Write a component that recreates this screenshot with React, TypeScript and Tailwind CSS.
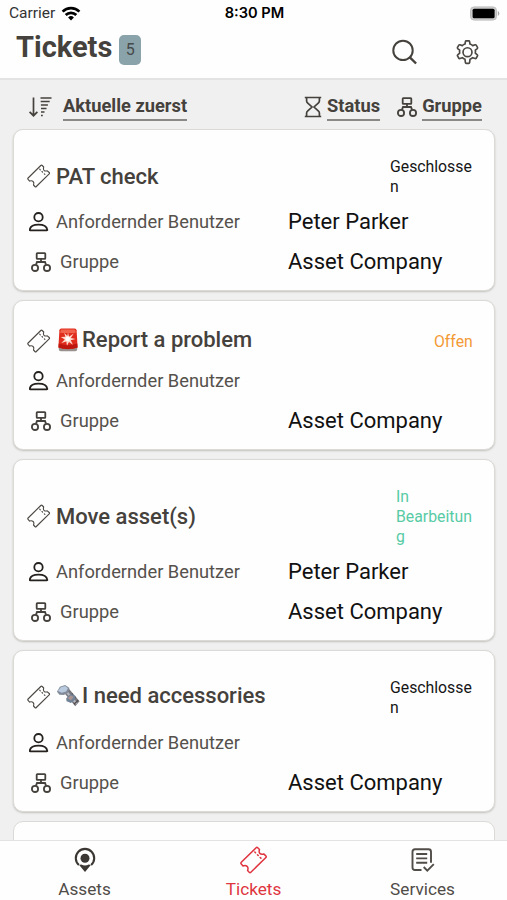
import type { ReactNode } from "react";
import clsx from "clsx";

type IconProps = { className?: string };

type Ticket = {
  title: string;
  emoji?: ReactNode;
  status: string;
  statusClass: string;
  user?: string;
  group: string;
};

function WifiIcon() {
  return (
    <svg viewBox="0 0 20 15" className="ml-[6px] h-[15px] w-5" fill="none" stroke="#000" strokeWidth="2.7">
      <path d="M1.6 5.6a12 12 0 0 1 16.8 0" />
      <path d="M4.7 9a7.5 7.5 0 0 1 10.6 0" />
      <path d="M10 14.4 7.1 11.5a4.1 4.1 0 0 1 5.8 0z" fill="#000" stroke="none" />
    </svg>
  );
}

function BatteryIcon() {
  return (
    <svg viewBox="0 0 31 15" className="h-[15px] w-[31px]">
      <rect x="1.5" y=".9" width="26" height="13.2" rx="3.6" fill="#ccc" stroke="#bdbdbd" />
      <rect x="3.6" y="2.7" width="22" height="9.6" rx="1.6" fill="#000" />
      <path d="M28.8 5c2 .8 2 4 0 4.8z" fill="#aaa" />
    </svg>
  );
}

function SearchIcon() {
  return (
    <svg viewBox="0 0 26 26" className="h-[26px] w-[26px]" fill="none" stroke="#45413c" strokeWidth="2">
      <circle cx="11" cy="11.4" r="9.7" />
      <path d="m17.6 18.2 6.5 6.3" strokeWidth="2.4" />
    </svg>
  );
}

function GearIcon() {
  return (
    <svg viewBox="0 0 24 24" className="h-[25px] w-[25px]" fill="none" stroke="#4b4742" strokeWidth="1.6" strokeLinejoin="round">
      <path d="M9.6 3.9 10 1.5Q10.1.8 10.8.8h2.4q.7 0 .8.7l.4 2.400q1.500.5 2.600 1.500l2.300-.8q.7-.2 1 .3l1.300 2.200q.3.600-.2 1.100l-1.900 1.600q.3 1.200 0 2.800l1.900 1.600q.5.500.2 1.100l-1.300 2.200q-.3.500-1 .3l-2.300-.8q-1.100 1-2.600 1.500l-.4 3.200q-.1.700-.8.700h-2.400q-.7 0-.8-.7l-.4-3.200Q8.100 18 7 17l-2.300.8q-.7.200-1-.3l-1.300-2.200q-.3-.6.200-1.100l1.900-1.600q-.3-1.600 0-2.800L2.600 8.200q-.5-.5-.2-1.100l1.300-2.200q.3-.5 1-.3L7 5.400q1.100-1 2.600-1.500z" />
      <circle cx="12" cy="11.7" r="4.3" />
    </svg>
  );
}

function SortIcon() {
  return (
    <svg viewBox="0 0 24 22" className="h-[22px] w-6" fill="none" stroke="#45413c" strokeWidth="1.7">
      <path d="M5.5 1.5v18M1.600 15.800l3.900 3.900 3.900-3.900" />
      <path d="M12.500 2h11M12.700 5.500h9M12.900 9h7M13 12.500h5.500M13 16h3.500M13 19.500h1.800" />
    </svg>
  );
}

function HourglassIcon() {
  return (
    <svg viewBox="0 0 18 22" className="h-[22px] w-[18px]" fill="none" stroke="#45413c" strokeWidth="1.7">
      <path d="M.8 1.5h16.4M.8 20.5h16.4" />
      <path d="M2.600 1.500v3.300q0 1.200.9 2L8 11l-4.500 4.200q-.9.800-.9 2v3.300M15.400 1.500v3.300q0 1.200-.9 2L10 11l4.500 4.200q.9.800.9 2v3.300" />
    </svg>
  );
}

function GroupIcon({ className }: IconProps) {
  return (
    <svg viewBox="0 0 20 20" className={clsx("h-5 w-5 shrink-0", className)} fill="none" stroke="#45413c" strokeWidth="1.8">
      <rect x="5.7" y="1.2" width="8.6" height="5.6" rx=".6" />
      <path d="M10 6.6V10M5 12.6 6 10h8l1 2.6" />
      <circle cx="4" cy="15.9" r="3.1" />
      <circle cx="16" cy="15.9" r="3.1" />
    </svg>
  );
}

function UserIcon() {
  return (
    <svg viewBox="0 0 20 20" className="h-5 w-5 shrink-0" fill="none" stroke="#24211f" strokeWidth="1.8" strokeLinejoin="round">
      <circle cx="9.5" cy="5.2" r="4.2" />
      <path d="M1.200 18.400q-.6 0-.5-.6.800-5.200 8.800-5.200t8.800 5.200q.1.600-.5.600z" />
    </svg>
  );
}

function TicketIcon({ className }: IconProps) {
  return (
    <svg viewBox="0 0 24 24" className={className} fill="none" stroke="currentColor" strokeLinejoin="round" strokeLinecap="round">
      <path d="M1.100 14 13.800 1.500q.7-.7 1.400 0l1.500 1.500c-.5 1.500-.5 2.500.3 3.300s1.900.9 3.300.5l1.900 1.700q.7.700 0 1.400L9.300 22.500q-.7.700-1.400 0l-1.400-1.500c.6-1.500.5-2.700-.4-3.500s-2-.9-3.500-.4L1.100 15.400q-.7-.7 0-1.400z" />
      <path d="m12.700 5.200.6.600m1.700 1.700.6.600m1.700 1.700.6.600" />
    </svg>
  );
}

function SirenEmoji() {
  return (
    <svg viewBox="0 0 24 24" className="mr-[2px] h-6 w-6 shrink-0">
      <path d="M2.800 18.500h18.400v3q0 1.800-2 1.800H4.800q-2 0-2-1.800z" fill="#99918e" />
      <path d="M3.400 2.300q.2-1.700 2-1.700h13.200q1.800 0 2 1.700l1 17.200q-9.600 3.600-19.200 0z" fill="#df2c1d" />
      <path d="M4.600 2.500q.2-1 1.200-1h12.400q1 0 1.200 1l.2 2.500H4.400z" fill="#f2634d" />
      <path d="M2.700 15.500q9.300 3.200 18.600 0l.2 4q-9.500 3.200-19 0z" fill="#bd170f" />
      <path d="m12 4.500 1 4.200 4.700-3.200-2.800 4.400 4.600 1.200-4.700 1.200 2.100 4.400-3.900-2.800-2 3.800-.7-4.300-5 1.500 3.500-3.500-4-2.400 4.600-.2-1.300-4.100 3.200 3.200z" fill="#ffd9cb" />
      <circle cx="11.700" cy="10.900" r="2.300" fill="#fff" />
    </svg>
  );
}

function BoltEmoji() {
  return (
    <svg viewBox="0 0 26 24" className="mr-px h-6 w-[25px] shrink-0">
      <path d="m8 8 5-4 11.500 13.500-4.500 5.200z" fill="#77777e" />
      <path d="m10.500 7 11 13" stroke="#b8b8c1" strokeWidth="2.200" />
      <path d="m13 13.500 4.500-4M16 17l4.500-4M18.700 20.500l4.300-4" stroke="#514b4d" strokeWidth="1.300" />
      <path d="M1 7.500 4 2.300 9.500.6l4.500 3-1.500 5L8 11 3.600 10.700z" fill="#818b9a" />
      <path d="m2 6.800 3-4 4.500-1.300 3 2.400-2 3.300-4.500 1.300z" fill="#b9cade" />
      <path d="m10.500 14.500 4.700-4.800 5 2.300-.4 4-4.300 3.200-4.500-1.800z" fill="#718397" />
      <path d="m12 14.300 3.500-3 3 1.700-3 3.500z" fill="#aa9391" />
    </svg>
  );
}

function AssetsIcon() {
  return (
    <svg viewBox="0 0 22 26" className="h-[26px] w-[22px]" fill="none">
      <path d="M4.9 18A9.200 9.200 0 1 1 17.100 18" stroke="#3b3733" strokeWidth="2.1" />
      <circle cx="11" cy="11.2" r="4.5" fill="#3b3733" />
      <path d="m5.200 18.100 2-.7q3.800 2.200 7.600 0l2 .7L11 25z" fill="#3b3733" />
    </svg>
  );
}

function ServicesIcon() {
  return (
    <svg viewBox="0 0 24 24" className="h-6 w-6" fill="none" stroke="#504c48" strokeWidth="1.9">
      <path d="M10.500 22H4q-2.500 0-2.500-2.500V3.700q0-2.500 2.500-2.500h13.500q2.500 0 2.500 2.500v11" />
      <path d="M5.200 6h11M5.200 10.400h11M5.200 14.800h11M12.700 19l3.600 3.600 6.500-6.500" />
    </svg>
  );
}

const tickets: Ticket[] = [
  { title: "PAT check", status: "Geschlossen", statusClass: "w-[84px] text-[#151515]", user: "Peter Parker", group: "Asset Company" },
  { title: "Report a problem", emoji: <SirenEmoji />, status: "Offen", statusClass: "w-[40px] text-[#f39a35]", group: "Asset Company" },
  { title: "Move asset(s)", status: "In Bearbeitung", statusClass: "w-[78px] text-[#57cba5]", user: "Peter Parker", group: "Asset Company" },
  { title: "I need accessories", emoji: <BoltEmoji />, status: "Geschlossen", statusClass: "w-[84px] text-[#151515]", group: "Asset Company" },
];

function TicketCard({ ticket }: { ticket: Ticket }) {
  return (
    <article className="shrink-0 rounded-[10px] border border-[#dbdad6] bg-[#fefefe] pt-[22px] pr-[20px] pb-2 pl-[13px] shadow-[0_1px_2px_rgba(60,55,40,0.25)]">
      <div className="flex min-h-[38px] items-center">
        <TicketIcon className="mb-[2px] h-6 w-6 shrink-0 stroke-[1.1] text-[#4b4742]" />
        <h2
          className={clsx(
            "ml-[5px] flex flex-1 items-center text-[22px] font-medium whitespace-nowrap text-[#45413c]",
            ticket.emoji ? "pb-[5px]" : "pb-[2px]",
          )}
        >
          {ticket.emoji}
          {ticket.title}
        </h2>
        <span className={clsx("py-[5px] text-[15.8px] leading-5 wrap-break-word", ticket.statusClass)}>{ticket.status}</span>
      </div>
      <div className="flex h-10 items-center pl-[2px]">
        <UserIcon />
        <span className="ml-[7px] w-[232px] text-[18.3px] text-[#55514c]">Anfordernder Benutzer</span>
        <span className="pb-[2px] text-[22px] text-[#111]">{ticket.user}</span>
      </div>
      <div className="flex h-10 items-center pl-1">
        <GroupIcon />
        <span className="ml-[9px] w-[228px] text-[18.3px] text-[#55514c]">Gruppe</span>
        <span className="pb-[2px] text-[22px] text-[#111]">{ticket.group}</span>
      </div>
    </article>
  );
}

export default function App() {
  return (
    <div className="flex h-[900px] w-[507px] flex-col overflow-hidden bg-[#f0f0f0] font-[Roboto,sans-serif]">
      <header className="h-20 shrink-0 border-b-2 border-[#e3e3e3] bg-[#fefefe]">
        <div className="grid h-[27px] grid-cols-3 items-center pr-[7px] pl-[9px] text-[15.5px]">
          <div className="flex items-center text-[#333]">
            Carrier
            <WifiIcon />
          </div>
          <span className="text-center font-[Inter,sans-serif] text-[14.6px] font-semibold text-black">8:30 PM</span>
          <div className="flex justify-end">
            <BatteryIcon />
          </div>
        </div>
        <div className="flex h-[50px] items-center pr-[27px] pl-4">
          <h1 className="pb-[8px] text-[29px] font-bold text-[#45413c]">Tickets</h1>
          <span className="mb-1 ml-[7px] flex h-[30px] w-[22px] items-center justify-center rounded-[5px] bg-[#8aa2a9] text-[16px] text-[#45494a]">5</span>
          <div className="ml-auto flex items-center gap-[37px]">
            <SearchIcon />
            <GearIcon />
          </div>
        </div>
      </header>

      <div className="flex h-[49px] shrink-0 items-center pt-[4px] pr-[25px] pl-7 text-[18.3px] font-bold text-[#45413c]">
        <SortIcon />
        <span className="ml-[11px] border-b-2 border-[#8b8985] leading-[26px]">Aktuelle zuerst</span>
        <div className="ml-auto flex items-center">
          <HourglassIcon />
          <span className="ml-[5px] border-b-2 border-[#8b8985] leading-[26px]">Status</span>
          <GroupIcon className="mr-[5px] ml-[17px]" />
          <span className="border-b-2 border-[#8b8985] leading-[26px]">Gruppe</span>
        </div>
      </div>

      <main className="flex min-h-0 flex-1 flex-col gap-[9px] overflow-hidden pr-3 pl-[13px]">
        {tickets.map((ticket) => (
          <TicketCard key={ticket.title} ticket={ticket} />
        ))}
        <div className="h-20 shrink-0 rounded-[10px] border border-[#dbdad6] bg-[#fefefe]" />
      </main>

      <nav className="grid h-[60px] shrink-0 grid-cols-3 border-t border-[#e3e3e3] bg-[#fefefe] text-[17.2px] text-[#504c48]">
        <div className="flex flex-col items-center pt-[6px]">
          <AssetsIcon />
          <span className="mt-1 leading-6">Assets</span>
        </div>
        <div className="flex flex-col items-center pt-[5px] text-[#e03540]">
          <TicketIcon className="h-[28px] w-[28px] stroke-[1.3]" />
          <span className="mt-[3px] leading-6">Tickets</span>
        </div>
        <div className="flex flex-col items-center pt-[7px]">
          <ServicesIcon />
          <span className="mt-[5px] leading-6">Services</span>
        </div>
      </nav>
    </div>
  );
}
